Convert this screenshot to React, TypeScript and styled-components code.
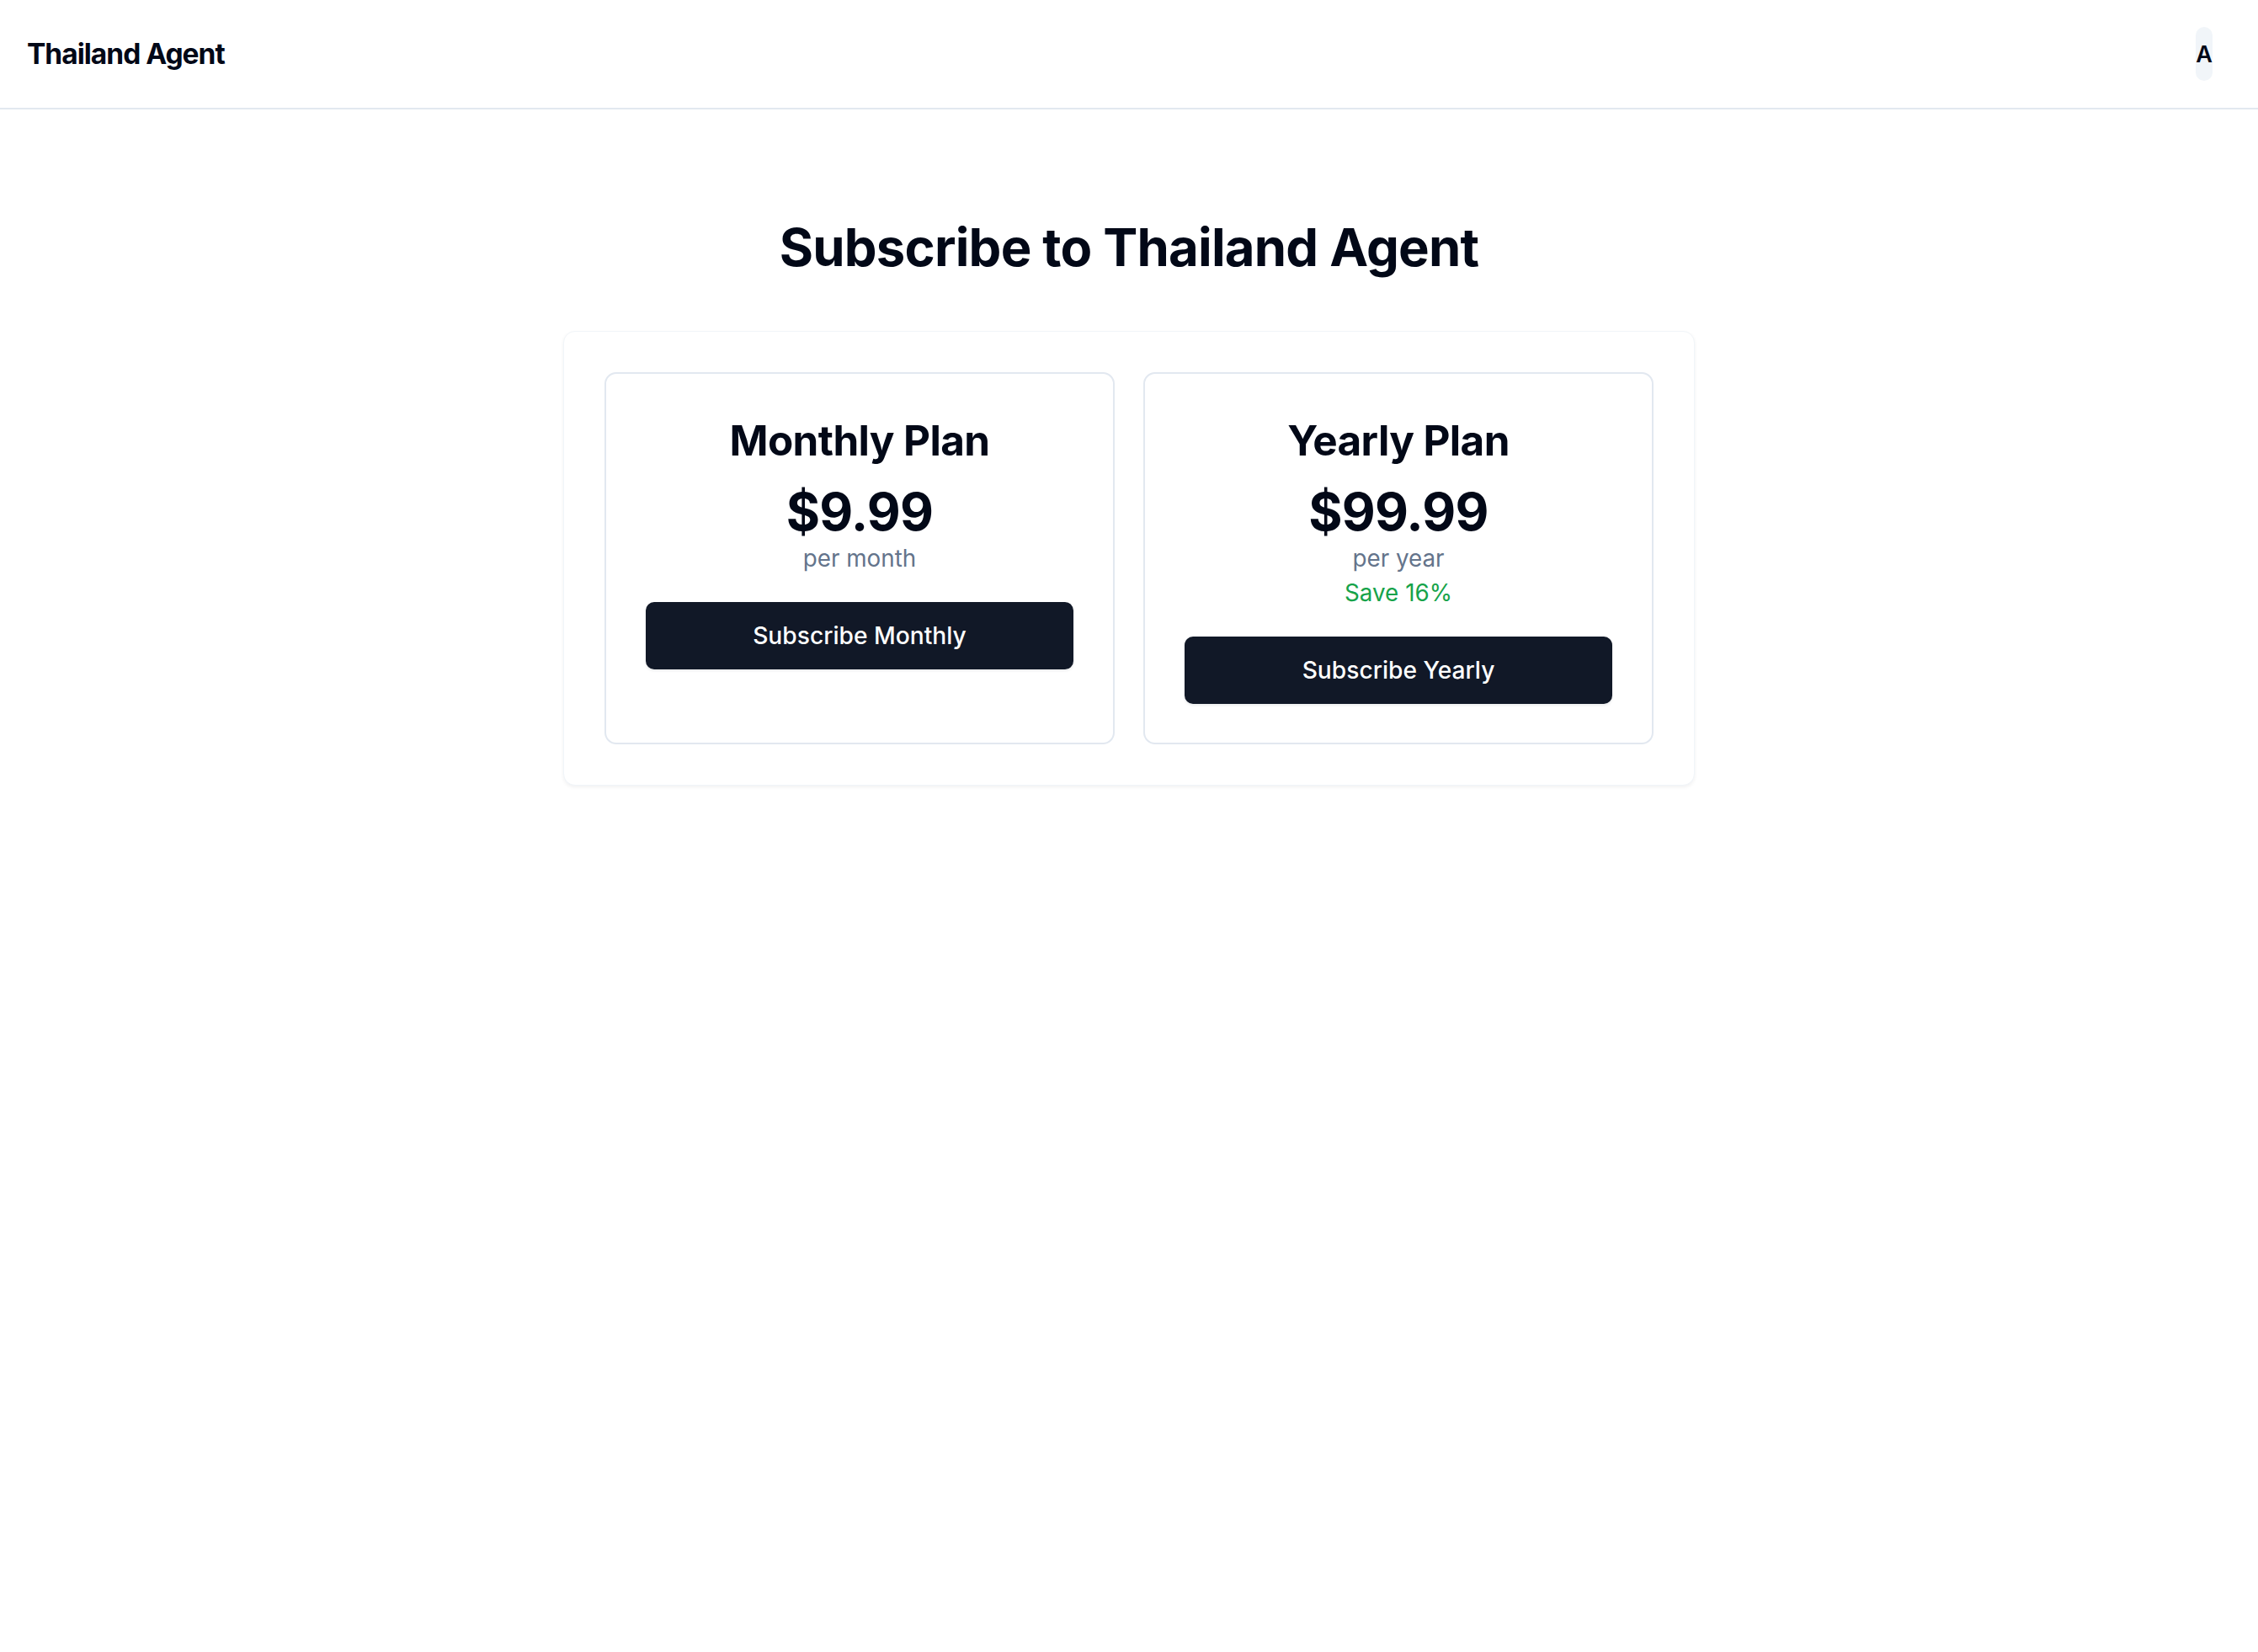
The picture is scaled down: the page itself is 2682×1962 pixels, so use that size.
import React from "react";
import styled, { createGlobalStyle } from "styled-components";

const GlobalStyle = createGlobalStyle`
  * { box-sizing: border-box; }
  html, body { margin: 0; padding: 0; background: #ffffff; }
  body {
    font-family: Inter, "Noto Sans", "Liberation Sans", sans-serif;
    color: #020817;
    -webkit-font-smoothing: antialiased;
  }
`;

const Page = styled.div`
  min-height: 1962px;
  background: #ffffff;
`;

const Header = styled.header`
  height: 130px;
  border-bottom: 2px solid #e2e8f0;
  display: flex;
  align-items: center;
  justify-content: space-between;
  padding: 0 54px 0 32px;
`;

const Brand = styled.div`
  font-size: 33.5px;
  font-weight: 700;
  letter-spacing: -1px;
  color: #020817;
`;

const Avatar = styled.button`
  width: 20px;
  height: 64px;
  border: none;
  border-radius: 10px;
  background: #f1f5f9;
  padding: 0;
  display: flex;
  align-items: center;
  justify-content: center;
  font-family: inherit;
  font-size: 27px;
  font-weight: 600;
  color: #020817;
  overflow: visible;
  white-space: nowrap;
`;

const Main = styled.main`
  display: flex;
  flex-direction: column;
  align-items: center;
  padding-top: 130px;
`;

const Title = styled.h1`
  margin: 0 0 65px;
  font-size: 61.6px;
  line-height: 68.4px;
  font-weight: 700;
  letter-spacing: -0.8px;
  color: #020817;
  text-align: center;
`;

const Panel = styled.section`
  width: 1344px;
  border: 1px solid #f1f5f9;
  border-radius: 14px;
  background: #ffffff;
  box-shadow: 0 2px 4px rgba(15, 23, 42, 0.06);
  padding: 48px;
  display: grid;
  grid-template-columns: 1fr 1fr;
  gap: 34px;
`;

const PlanCard = styled.div`
  border: 2px solid #e2e8f0;
  border-radius: 14px;
  padding: 52px 47px 46px;
  display: flex;
  flex-direction: column;
  align-items: center;
  text-align: center;
`;

const PlanName = styled.h2`
  margin: 0 0 23px;
  font-size: 49.4px;
  line-height: 54.7px;
  font-weight: 700;
  letter-spacing: -0.6px;
  color: #020817;
`;

const Price = styled.div`
  font-size: 61.6px;
  line-height: 68.4px;
  font-weight: 700;
  letter-spacing: -0.8px;
  color: #020817;
`;

const Period = styled.div`
  font-size: 27.8px;
  line-height: 41px;
  color: #64748b;
`;

const Savings = styled.div`
  font-size: 27.8px;
  line-height: 41px;
  color: #16a34a;
`;

const SubscribeButton = styled.button`
  margin-top: 31px;
  width: 100%;
  height: 80px;
  border: none;
  border-radius: 10px;
  background: #111827;
  color: #ffffff;
  font-family: inherit;
  font-size: 28.2px;
  font-weight: 500;
  box-shadow: 0 2px 3px rgba(15, 23, 42, 0.08);
  cursor: pointer;
`;

type Plan = {
  name: string;
  price: string;
  period: string;
  savings?: string;
  cta: string;
};

const plans: Plan[] = [
  { name: "Monthly Plan", price: "$9.99", period: "per month", cta: "Subscribe Monthly" },
  { name: "Yearly Plan", price: "$99.99", period: "per year", savings: "Save 16%", cta: "Subscribe Yearly" },
];

export default function App() {
  return (
    <Page>
      <GlobalStyle />
      <Header>
        <Brand>Thailand Agent</Brand>
        <Avatar>A</Avatar>
      </Header>
      <Main>
        <Title>Subscribe to Thailand Agent</Title>
        <Panel>
          {plans.map((p) => (
            <PlanCard key={p.name}>
              <PlanName>{p.name}</PlanName>
              <Price>{p.price}</Price>
              <Period>{p.period}</Period>
              {p.savings && <Savings>{p.savings}</Savings>}
              <SubscribeButton>{p.cta}</SubscribeButton>
            </PlanCard>
          ))}
        </Panel>
      </Main>
    </Page>
  );
}
